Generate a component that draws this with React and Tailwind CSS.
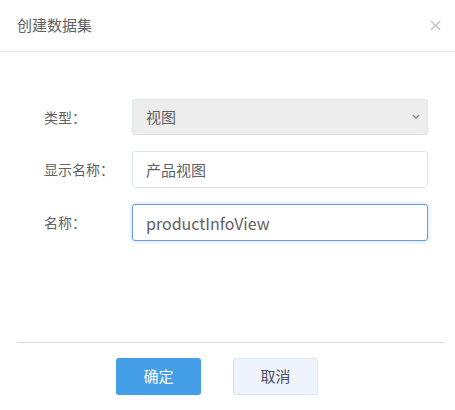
import { useState } from 'react';

const font = { fontFamily: '"Noto Sans CJK SC", "Noto Sans", sans-serif' };

function Row({ label, children }) {
  return (
    <div className="flex items-center">
      <label className="w-[88px] shrink-0 text-[14px] text-[#606266]">{label}</label>
      <div className="flex-1">{children}</div>
    </div>
  );
}

export default function App() {
  const [displayName, setDisplayName] = useState('产品视图');
  const [name, setName] = useState('productInfoView');

  return (
    <div className="h-[410px] w-[455px] bg-white" style={font}>
      <div className="flex h-[52px] items-center justify-between border-b border-[#e3e8f0] pl-[17px] pr-[12px]">
        <h3 className="text-[15px] text-[#606266]">创建数据集</h3>
        <button className="flex h-4 w-4 items-center justify-center text-[#c3c5c9]">
          <svg viewBox="0 0 12 12" className="h-[11px] w-[11px]" fill="none" stroke="currentColor" strokeWidth="1.6">
            <path d="M1 1l10 10M11 1L1 11" />
          </svg>
        </button>
      </div>

      <div className="flex flex-col gap-4 pl-[44px] pr-[27px] pt-[47px]">
        <Row label="类型：">
          <div className="relative">
            <select
              disabled
              className="h-9 w-full appearance-none rounded-[3px] border border-[#dfe4ec] bg-[#ededed] px-[13px] text-[15px] text-[#606266]"
            >
              <option>视图</option>
            </select>
            <svg viewBox="0 0 10 6" className="pointer-events-none absolute right-[8px] top-[15px] h-[5px] w-[8px] text-[#8a8d92]" fill="none" stroke="currentColor" strokeWidth="1.8">
              <path d="M1 1l4 4 4-4" />
            </svg>
          </div>
        </Row>
        <Row label="显示名称：">
          <input
            value={displayName}
            onChange={(e) => setDisplayName(e.target.value)}
            className="h-[37px] w-full rounded-[3px] border border-[#e0e6ef] bg-white px-[13px] text-[15px] text-[#606266] outline-none"
          />
        </Row>
        <Row label="名称：">
          <input
            value={name}
            onChange={(e) => setName(e.target.value)}
            className="h-[37px] w-full rounded-[3px] border border-[#6a9fe6] bg-white px-[13px] text-[16px] text-[#606266] shadow-[0_0_4px_rgba(64,140,240,0.35)] outline-none"
          />
        </Row>
      </div>

      <div className="ml-[17px] mr-[11px] mt-[101px] border-t border-[#d6d6d6]" />

      <div className="flex gap-8 pl-[116px] pt-[15px]">
        <button className="h-[37px] w-[85px] rounded-[3px] bg-[#449fe8] text-[15px] text-white">确定</button>
        <button className="h-[37px] w-[85px] rounded-[3px] border border-[#dce4f0] bg-[#eef3fc] text-[15px] text-[#4a5060]">取消</button>
      </div>
    </div>
  );
}
